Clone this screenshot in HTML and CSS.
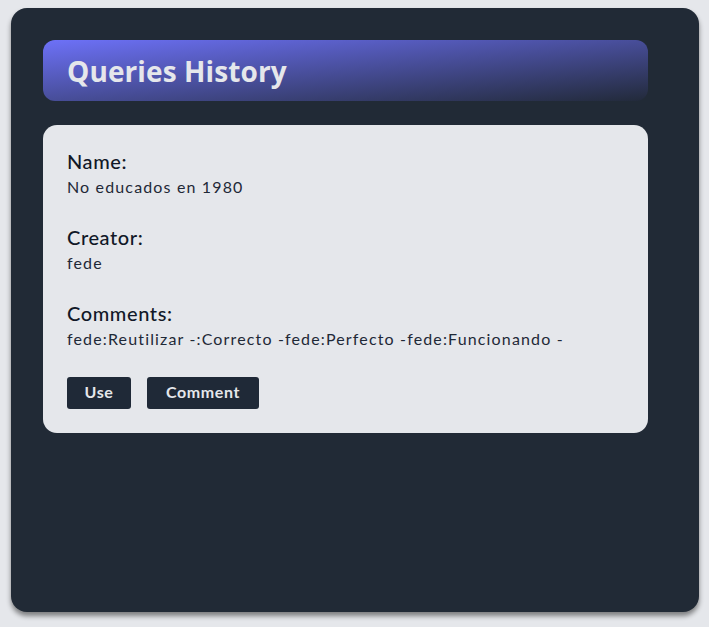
FILE: index.html
```html
<!DOCTYPE html>
<html lang="en">
<head>
<meta charset="utf-8">
<title>Queries History</title>
<link rel="stylesheet" href="styles.css">
</head>
<body>
  <main class="panel">
    <header class="panel-header">
      <h1 class="panel-title">Queries History</h1>
    </header>
    <section class="query-card">
      <div class="field">
        <h2 class="field-label">Name:</h2>
        <p class="field-value">No educados en 1980</p>
      </div>
      <div class="field">
        <h2 class="field-label">Creator:</h2>
        <p class="field-value">fede</p>
      </div>
      <div class="field">
        <h2 class="field-label">Comments:</h2>
        <p class="field-value">fede:Reutilizar -:Correcto -fede:Perfecto -fede:Funcionando -</p>
      </div>
      <div class="actions">
        <button class="btn btn-use">Use</button>
        <button class="btn btn-comment">Comment</button>
      </div>
    </section>
  </main>
</body>
</html>
```

FILE: styles.css
```css
* { box-sizing: border-box; }

html, body {
  background: #e5e7eb;
}

body {
  margin: 0;
  padding: 8px 10px 15px 11px;
  font-family: "Lato", "Noto Sans", sans-serif;
  color: #1f2937;
}

.panel {
  height: 604px;
  background: #212a36;
  border-radius: 16px;
  padding: 32px 51px 32px 32px;
  box-shadow: 0 4px 5px rgba(0, 0, 0, 0.45);
  display: flex;
  flex-direction: column;
  gap: 24px;
}

.panel-header {
  height: 61px;
  border-radius: 12px;
  padding: 0 24px;
  display: flex;
  align-items: center;
  background: linear-gradient(to bottom right, #6d71f8 0%, #222a3a 100%);
}

.panel-title {
  margin: 0;
  font-family: "Open Sans", "Noto Sans", sans-serif;
  font-weight: 700;
  font-size: 28px;
  letter-spacing: 0.1px;
  color: #e5e7eb;
  line-height: 36px;
}

.query-card {
  background: #e5e7eb;
  border-radius: 14px;
  padding: 22px 24px 24px;
  display: flex;
  flex-direction: column;
  gap: 24px;
}

.field-label {
  margin: 0;
  font-size: 20px;
  line-height: 28px;
  font-weight: 500;
  letter-spacing: 0.6px;
  color: #111827;
}

.field-value {
  margin: 0;
  font-size: 16px;
  line-height: 24px;
  letter-spacing: 1.15px;
  color: #1f2937;
}

.actions {
  display: flex;
  gap: 16px;
  margin-top: 2px;
}

.btn {
  height: 32px;
  padding: 0 16px 3px;
  border: none;
  border-radius: 3px;
  background: #1f2937;
  color: #e5e7eb;
  font-family: "Lato", "Noto Sans", sans-serif;
  font-weight: 700;
  font-size: 16px;
  letter-spacing: 0.6px;
}

.btn-use { width: 64px; }
.btn-comment { width: 112px; }
```
